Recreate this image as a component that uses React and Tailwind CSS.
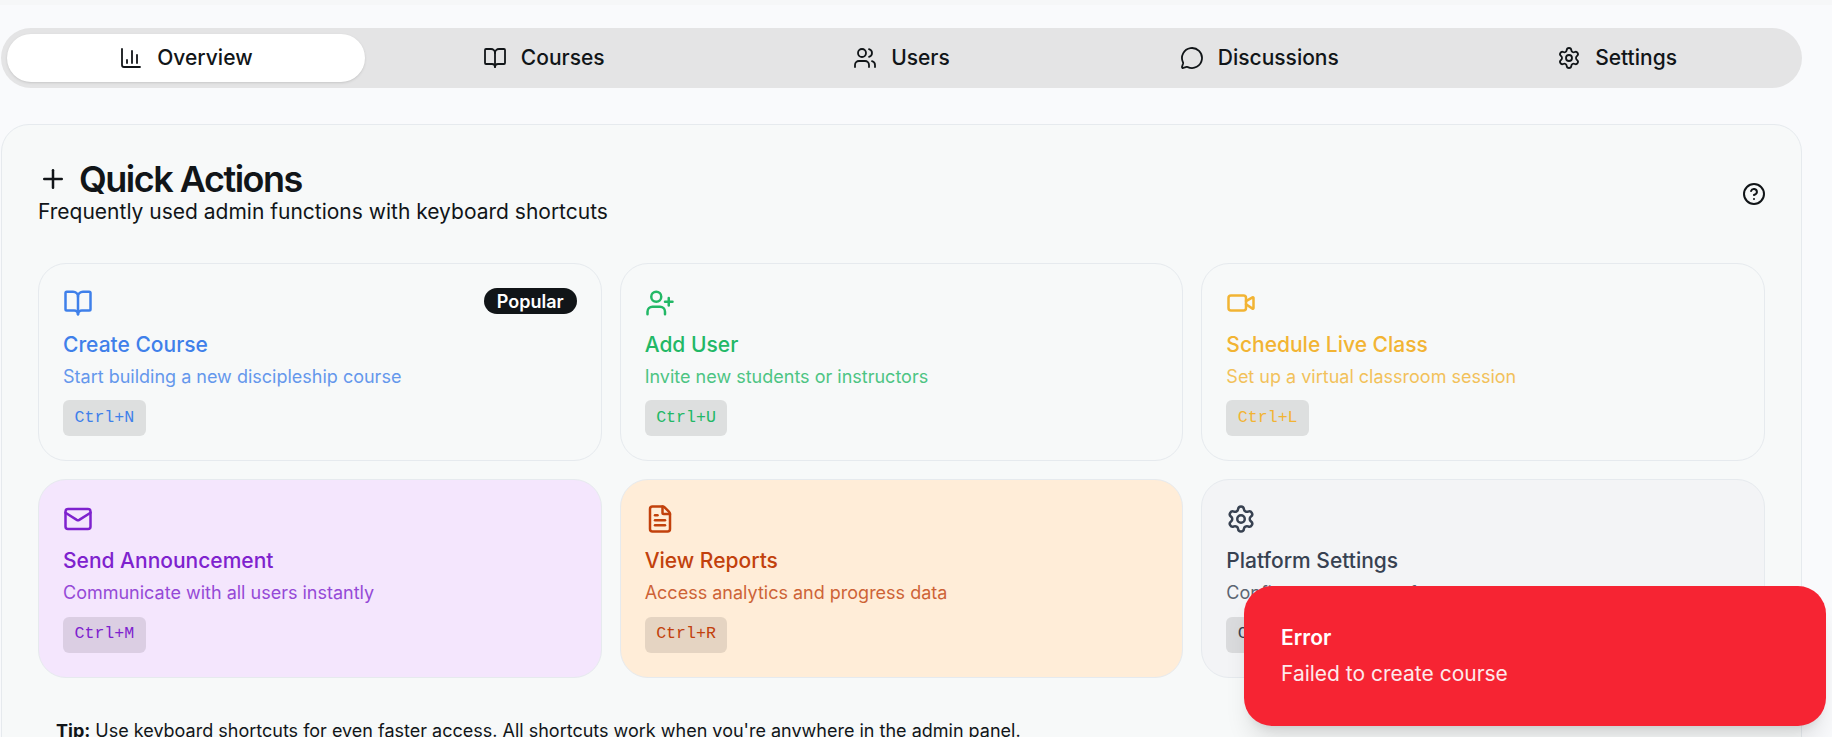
import { ChartColumn, BookOpen, Users, MessageCircle, Settings, Plus, CircleHelp, UserPlus, Video, Mail, FileText } from 'lucide-react';

const tabs = [
    { label: 'Overview', icon: ChartColumn, active: true },
    { label: 'Courses', icon: BookOpen },
    { label: 'Users', icon: Users },
    { label: 'Discussions', icon: MessageCircle },
    { label: 'Settings', icon: Settings },
];

const actions = [
    { title: 'Create Course', desc: 'Start building a new discipleship course', keys: 'Ctrl+N', icon: BookOpen, color: 'text-[#3f80ea]', bg: 'bg-transparent', popular: true },
    { title: 'Add User', desc: 'Invite new students or instructors', keys: 'Ctrl+U', icon: UserPlus, color: 'text-[#22b866]', bg: 'bg-transparent' },
    { title: 'Schedule Live Class', desc: 'Set up a virtual classroom session', keys: 'Ctrl+L', icon: Video, color: 'text-[#f2b433]', bg: 'bg-transparent' },
    { title: 'Send Announcement', desc: 'Communicate with all users instantly', keys: 'Ctrl+M', icon: Mail, color: 'text-[#7e22ce]', bg: 'bg-[#f4e6fd]' },
    { title: 'View Reports', desc: 'Access analytics and progress data', keys: 'Ctrl+R', icon: FileText, color: 'text-[#c2410c]', bg: 'bg-[#ffedd8]' },
    { title: 'Platform Settings', desc: 'Configure system preferences', keys: 'Ctrl+S', icon: Settings, color: 'text-[#374151]', bg: 'bg-[#f3f4f6]' },
];

function ActionCard({ action }) {
    const Icon = action.icon;
    return (
        <div className={`rounded-[28px] border border-[#e6eaee] px-[24px] pt-[24px] pb-[24px] ${action.bg} ${action.color}`}>
            <div className="flex items-start justify-between h-[32px]">
                <Icon size={30} strokeWidth={2} />
                {action.popular && (
                    <span className="rounded-full bg-[#111518] px-[13px] h-[26px] flex items-center text-[18px] font-semibold text-white">Popular</span>
                )}
            </div>
            <h3 className="mt-[11px] text-[21px] leading-[28px] font-medium">{action.title}</h3>
            <p className="mt-[4px] text-[18px] leading-[28.25px] opacity-80">{action.desc}</p>
            <kbd className="mt-[9px] flex w-fit h-[36px] items-center rounded-[6px] bg-black/10 px-[11.5px] font-['Liberation_Mono',monospace] text-[16.6px]">{action.keys}</kbd>
        </div>
    );
}

export default function App() {
    return (
        <div className="relative h-screen overflow-hidden bg-[#f9fafc] font-['Inter',sans-serif] text-[#111518]">
            <div className="h-[5px] bg-[#f6f7f8]" />
            <div className="pl-px pr-[30px] pt-[23px]">
                {/* Tabs */}
                <div className="flex h-[60px] items-center rounded-[30px] bg-[#e4e4e5] px-[6px]">
                    {tabs.map(tab => {
                        const Icon = tab.icon;
                        return (
                            <div key={tab.label} className={`flex h-[48px] flex-1 items-center justify-center gap-[14px] rounded-[24px] text-[21px] font-medium ${tab.active ? 'bg-white shadow-sm' : ''}`}>
                                <Icon size={24} strokeWidth={1.8} />
                                {tab.label}
                            </div>
                        );
                    })}
                </div>

                {/* Quick actions panel */}
                <div className="mt-[36px] rounded-t-[28px] border border-[#e6eaee] bg-[#f7f9f9] px-[36px] pt-[33px] pb-[40px]">
                    <div className="flex items-center justify-between">
                        <div>
                            <h2 className="flex items-center gap-[11px] text-[36px] leading-[42px] font-semibold tracking-[-1.5px]">
                                <Plus size={30} strokeWidth={2} />
                                Quick Actions
                            </h2>
                            <p className="text-[21px] leading-[24px]">Frequently used admin functions with keyboard shortcuts</p>
                        </div>
                        <CircleHelp size={24} strokeWidth={2} className="mt-[5px] -mr-px" />
                    </div>

                    <div className="mt-[39px] grid grid-cols-3 gap-[18px]">
                        {actions.map(action => <ActionCard key={action.title} action={action} />)}
                    </div>

                    <p className="mt-[41px] pl-[18px] text-[18px] leading-[24px]">
                        <strong className="font-bold">Tip:</strong> Use keyboard shortcuts for even faster access. All shortcuts work when you're anywhere in the admin panel.
                    </p>
                </div>
            </div>

            {/* Toast */}
            <div className="absolute right-[6px] bottom-[11px] h-[140px] w-[582px] rounded-[28px] bg-[#f62433] px-[37px] pt-[37px] text-white shadow-xl">
                <div className="text-[21px] leading-[30px] font-semibold">Error</div>
                <div className="mt-[6px] text-[21px] leading-[30px] opacity-90">Failed to create course</div>
            </div>
        </div>
    );
}
